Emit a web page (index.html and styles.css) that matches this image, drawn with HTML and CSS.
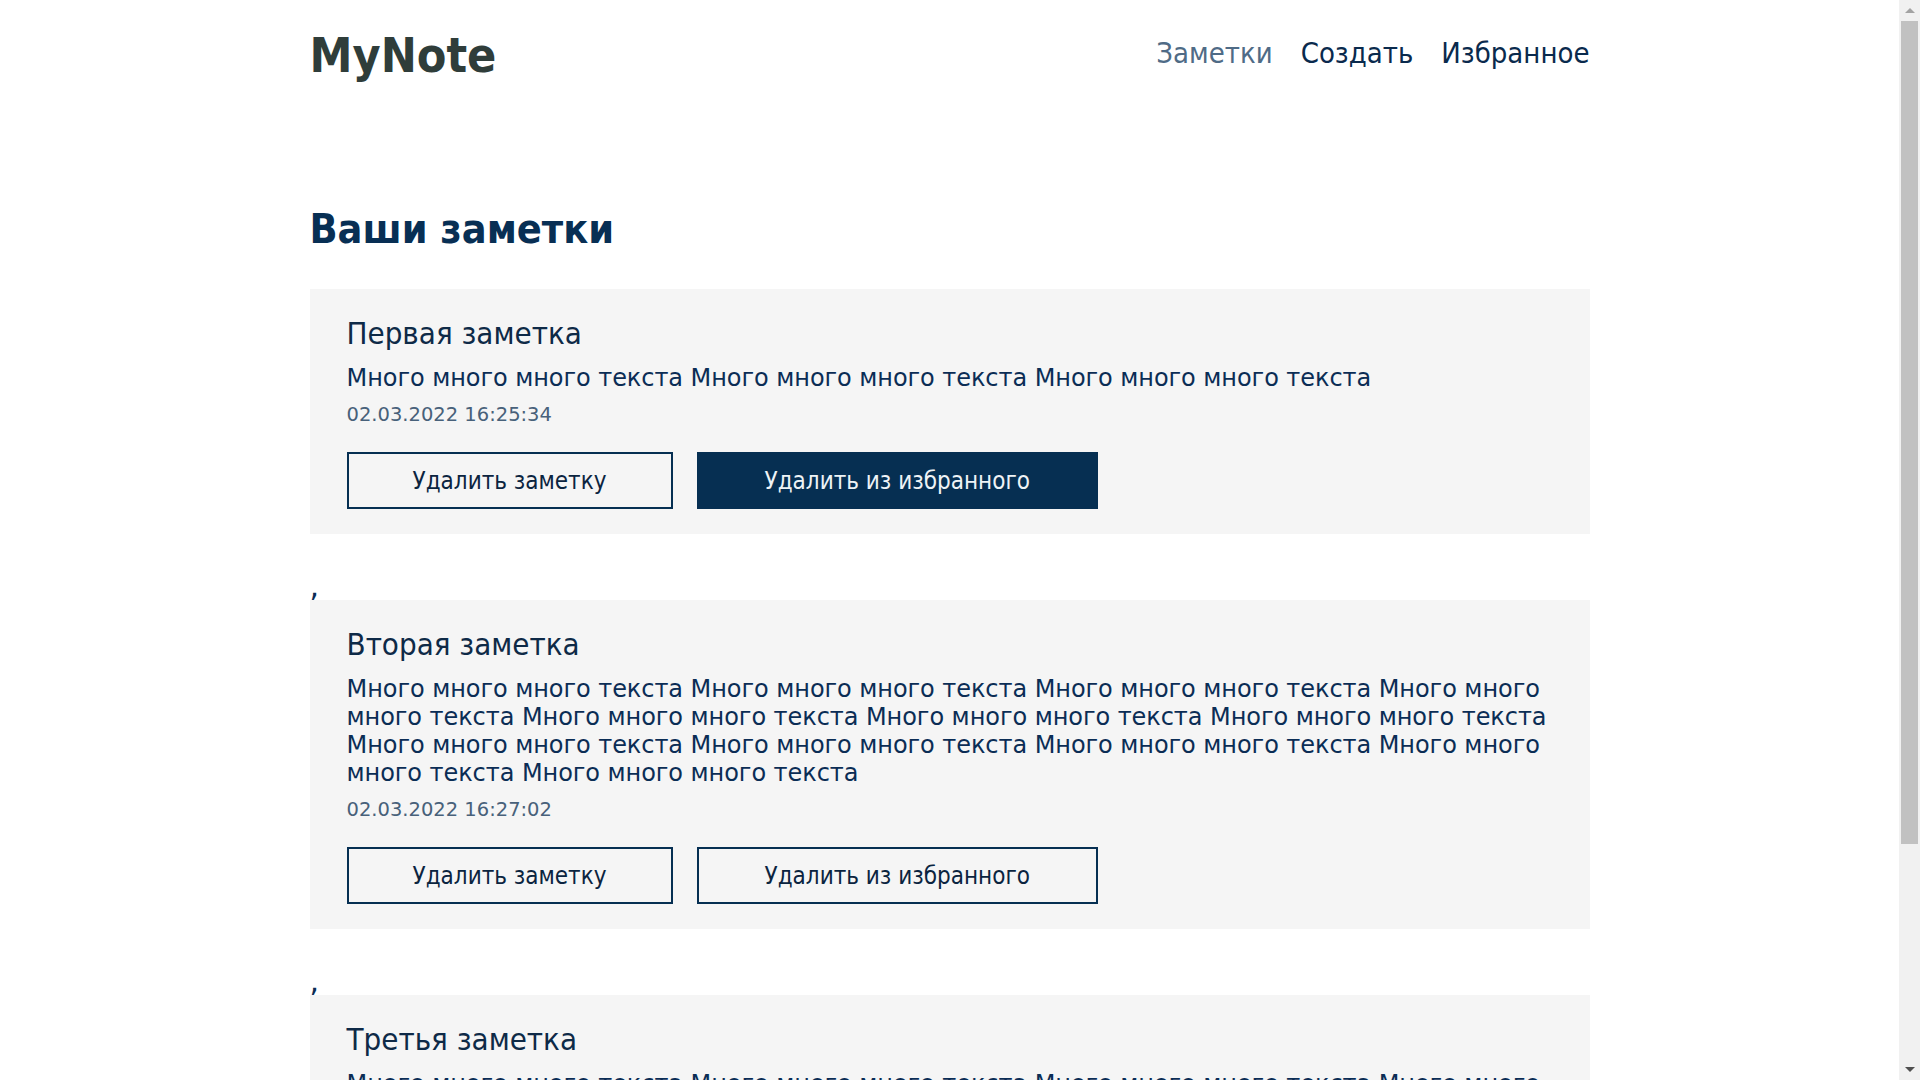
FILE: index.html
```html
<!DOCTYPE html>
<html lang="ru">
<head>
<meta charset="utf-8">
<title>MyNote</title>
<link rel="stylesheet" href="styles.css">
</head>
<body>
<div class="page">
  <div class="container">
    <header class="header">
      <div class="logo">MyNote</div>
      <nav class="nav">
        <a class="nav-link nav-link-active" href="#">Заметки</a>
        <a class="nav-link" href="#">Создать</a>
        <a class="nav-link" href="#">Избранное</a>
      </nav>
    </header>
    <main>
      <h1 class="page-title">Ваши заметки</h1>
      <div class="notes">
        <div class="card">
          <h2 class="card-title">Первая заметка</h2>
          <p class="card-text">Много много много текста Много много много текста Много много много текста</p>
          <div class="card-date">02.03.2022 16:25:34</div>
          <div class="card-actions">
            <button class="btn">Удалить заметку</button>
            <button class="btn btn-filled">Удалить из избранного</button>
          </div>
        </div>,
        <div class="card">
          <h2 class="card-title">Вторая заметка</h2>
          <p class="card-text">Много много много текста Много много много текста Много много много текста Много много много текста Много много много текста Много много много текста Много много много текста Много много много текста Много много много текста Много много много текста Много много много текста Много много много текста</p>
          <div class="card-date">02.03.2022 16:27:02</div>
          <div class="card-actions">
            <button class="btn">Удалить заметку</button>
            <button class="btn">Удалить из избранного</button>
          </div>
        </div>,
        <div class="card">
          <h2 class="card-title">Третья заметка</h2>
          <p class="card-text">Много много много текста Много много много текста Много много много текста Много много много текста Много много много текста Много много много текста Много много много текста Много много много текста Много много много текста Много много много текста Много много много текста Много много много текста</p>
          <div class="card-date">02.03.2022 16:28:11</div>
          <div class="card-actions">
            <button class="btn">Удалить заметку</button>
            <button class="btn">Удалить из избранного</button>
          </div>
        </div>
      </div>
    </main>
  </div>
</div>
<aside class="scrollbar" aria-hidden="true">
  <div class="sb-btn sb-up"></div>
  <div class="sb-track"><div class="sb-thumb"></div></div>
  <div class="sb-btn sb-down"></div>
</aside>
</body>
</html>
```
FILE: styles.css
```css
html {
  background: #ffffff;
}

body {
  margin: 0;
  height: 100vh;
  overflow: hidden;
  display: flex;
  font-family: "DejaVu Sans", Verdana, sans-serif;
  color: #0b2d55;
}

.page {
  flex: 1;
  min-width: 0;
  overflow: hidden;
}

/* classic window scrollbar */
.scrollbar {
  flex: none;
  width: 21px;
  display: flex;
  flex-direction: column;
  background: #f1f1f1;
}

.sb-btn {
  height: 21px;
  flex: none;
  display: flex;
  align-items: center;
  justify-content: center;
}

.sb-up::before {
  content: "";
  border-left: 5px solid transparent;
  border-right: 5px solid transparent;
  border-bottom: 5px solid #a3a3a3;
}

.sb-down::before {
  content: "";
  border-left: 5px solid transparent;
  border-right: 5px solid transparent;
  border-top: 5px solid #505050;
}

.sb-track {
  flex: 1;
  padding: 0 2px;
}

.sb-thumb {
  height: 823px;
  background: #c1c1c1;
}

.container {
  max-width: 1280px;
  margin: 0 auto;
}

.header {
  display: flex;
  align-items: center;
  justify-content: space-between;
  padding-top: 27px;
}

.logo {
  font-family: "DejaVu Sans Condensed", "DejaVu Sans", sans-serif;
  font-weight: bold;
  font-size: 48px;
  line-height: 56px;
  color: #2f3d3a;
}

.nav {
  display: flex;
  gap: 28px;
  margin-bottom: 5px;
}

.nav-link {
  font-family: "DejaVu Sans Condensed", "DejaVu Sans", sans-serif;
  font-size: 29px;
  line-height: 34px;
  color: #0a2a4d;
  text-decoration: none;
}

.nav-link-active {
  color: #4f6b86;
}

.page-title {
  margin: 122px 0 36px;
  font-family: "DejaVu Sans Condensed", "DejaVu Sans", sans-serif;
  font-weight: bold;
  font-size: 41px;
  line-height: 48px;
  color: #082f54;
}

.notes {
  font-size: 30px;
  line-height: 28px;
  color: #0b2d55;
}

.card {
  background: #f5f5f5;
  padding: 26px 30px 25px 37px;
  margin-bottom: 38px;
}

.card-title {
  margin: 0 0 13px;
  font-family: "DejaVu Sans Condensed", "DejaVu Sans", sans-serif;
  font-weight: normal;
  font-size: 31px;
  line-height: 36px;
  color: #0e2a47;
}

.card-text {
  margin: 0 0 11px;
  font-size: 24px;
  line-height: 28px;
  letter-spacing: -0.0025em;
  color: #0b2d55;
}

.card-date {
  font-size: 19.5px;
  line-height: 24px;
  color: #48617a;
  margin-bottom: 25px;
}

.card-actions {
  display: flex;
  gap: 24px;
}

.btn {
  font-family: "DejaVu Sans Condensed", "DejaVu Sans", sans-serif;
  font-size: 24px;
  line-height: 29px;
  padding: 13px 64px 11px;
  border: 2px solid #062f52;
  background: transparent;
  color: #0b2440;
  cursor: pointer;
}

.btn + .btn {
  padding: 13px 66px 11px;
}

.btn-filled {
  background: #062f52;
  color: #eef3f6;
}
```
